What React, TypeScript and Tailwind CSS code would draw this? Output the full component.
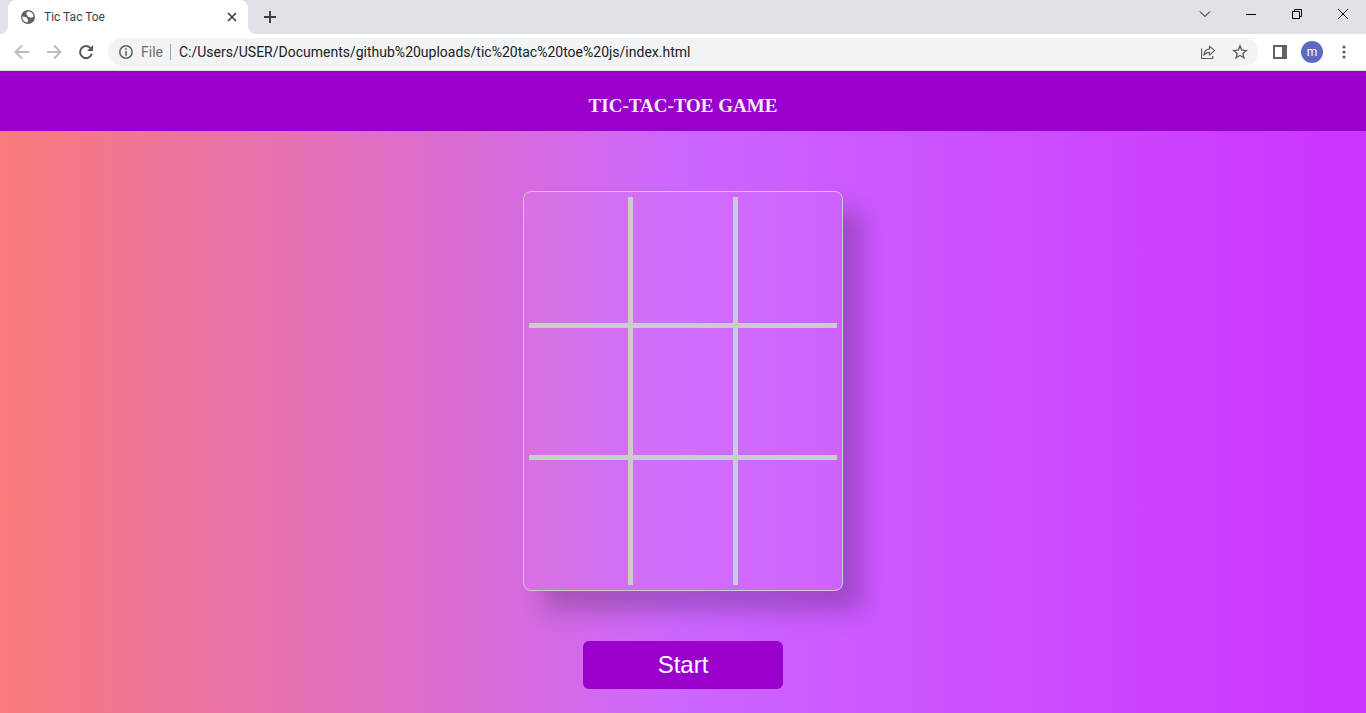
import { useState } from "react";

function GlobeIcon() {
  return (
    <svg width="16" height="16" viewBox="0 0 16 16" aria-hidden="true">
      <circle cx="8" cy="8" r="7" fill="#5f6368" />
      <path
        d="M9.200 2.600C7.500 2.500 6.300 3.400 6.300 4.600c0 1.400 1.100 1.200 1.100 2.100 0 .900.800 1.300 1.900 1.200.900 0 1 .900 1.700.900 1 0 1.600-.900 2.600-.700A5.700 5.700 0 0 0 9.200 2.600zM2.300 7.400c1 .700 1.900.300 2.900.500 1.500.200 2.200 1 2.200 2 0 .600.900.400.900 1.100 0 .900-.900 1-.900 2.600A5.700 5.700 0 0 1 2.300 7.400z"
        fill="#fff"
      />
    </svg>
  );
}

function TabStrip() {
  return (
    <div className="flex h-[34px] items-stretch bg-[#dee1e6]">
      <div className="flex w-2 items-end bg-white">
        <div className="h-full w-2 rounded-br-lg bg-[#dee1e6]" />
      </div>
      <div className="flex w-[240px] items-center bg-[#dee1e6]">
        <div className="flex h-full w-full items-center rounded-t-lg bg-white pr-2 pl-3">
          <GlobeIcon />
          <span className="ml-2 flex-1 text-xs text-[#3c4043]">Tic Tac Toe</span>
          <button type="button" aria-label="Close tab" className="flex size-4 items-center justify-center">
            <svg width="10" height="10" viewBox="0 0 10 10" stroke="#3c4043" strokeWidth="1.700">
              <path d="M1 1l8 8M9 1l-8 8" />
            </svg>
          </button>
        </div>
      </div>
      <div className="w-2 bg-white">
        <div className="h-full w-2 rounded-bl-lg bg-[#dee1e6]" />
      </div>
      <button type="button" aria-label="New tab" className="flex w-7 items-center justify-center">
        <svg width="12" height="12" viewBox="0 0 12 12" stroke="#3c4043" strokeWidth="2">
          <path d="M6 0v12M0 6h12" />
        </svg>
      </button>
      <div className="ml-auto flex h-7 text-black">
        <button type="button" aria-label="Search tabs" className="flex w-[46px] items-center justify-center">
          <svg width="12" height="8" viewBox="0 0 12 8" fill="none" stroke="currentColor">
            <path d="M1 1.500l5 5 5-5" />
          </svg>
        </button>
        <button type="button" aria-label="Minimize" className="flex w-[46px] items-center justify-center">
          <svg width="10" height="2" viewBox="0 0 10 2" fill="currentColor">
            <path d="M0 1h10v1H0z" />
          </svg>
        </button>
        <button type="button" aria-label="Restore" className="flex w-[46px] items-center justify-center">
          <svg width="10" height="10" viewBox="0 0 10 10" fill="none" stroke="currentColor">
            <path d="M.5 2.500h7v7h-7zM2.500 2.500v-2h7v7h-2" />
          </svg>
        </button>
        <button type="button" aria-label="Close" className="flex w-[46px] items-center justify-center">
          <svg width="12" height="12" viewBox="0 0 12 12" stroke="currentColor">
            <path d="M1 1l10 10M11 1L1 11" />
          </svg>
        </button>
      </div>
    </div>
  );
}

function Toolbar() {
  return (
    <div className="flex h-[37px] items-center border-b border-[#dadce0] bg-white pl-1.5">
      <button type="button" aria-label="Back" className="flex size-8 items-center justify-center">
        <svg width="16" height="16" viewBox="0 0 16 16" fill="none" stroke="#babcbe" strokeWidth="2">
          <path d="M15 8H2.500M8 1.500L1.500 8 8 14.500" />
        </svg>
      </button>
      <button type="button" aria-label="Forward" className="flex size-8 items-center justify-center">
        <svg width="16" height="16" viewBox="0 0 16 16" fill="none" stroke="#babcbe" strokeWidth="2">
          <path d="M1 8h12.500M8 1.500L14.500 8 8 14.500" />
        </svg>
      </button>
      <button type="button" aria-label="Reload" className="flex size-8 items-center justify-center">
        <svg width="16" height="16" viewBox="0 0 16 16">
          <path d="M12.700 4.300A6 6 0 1 0 13.800 9.800" fill="none" stroke="#54575c" strokeWidth="2" />
          <path d="M15 1v6H9z" fill="#54575c" />
        </svg>
      </button>
      <div className="ml-1.5 flex h-7 flex-1 items-center rounded-full bg-[#f1f3f4] pr-2.5 pl-[11px]">
        <svg width="14" height="14" viewBox="0 0 14 14" aria-hidden="true">
          <circle cx="7" cy="7" r="6.200" fill="none" stroke="#5f6368" strokeWidth="1.500" />
          <path d="M6.200 3.300h1.600v1.500H6.200zM6.200 6h1.600v4.700H6.200z" fill="#5f6368" />
        </svg>
        <label htmlFor="address" className="ml-2 w-[22px] text-sm text-[#6b6f74]">
          File
        </label>
        <span className="ml-[7px] h-4 w-px bg-[#9aa0a6]" />
        <input
          id="address"
          readOnly
          value="C:/Users/USER/Documents/github%20uploads/tic%20tac%20toe%20js/index.html"
          className="ml-2 min-w-0 flex-1 bg-transparent text-sm text-[#202124] outline-none"
        />
        <button type="button" aria-label="Share this page" className="flex size-4 items-center justify-center">
          <svg width="16" height="16" viewBox="0 0 16 16" fill="none" stroke="#5f6368" strokeWidth="1.200">
            <path d="M1.600 4.500v10h11.200v-2.500" />
            <path d="M9.500 2.200v2.700C6 5.300 4.200 7.600 3.800 11.200c1.500-2 3.200-2.800 5.700-2.800v2.700L14.600 6.600z" strokeLinejoin="round" />
          </svg>
        </button>
        <button type="button" aria-label="Bookmark this tab" className="ml-4 flex size-4 items-center justify-center">
          <svg width="16" height="16" viewBox="0 0 16 16" fill="none" stroke="#5f6368" strokeWidth="1.400">
            <path d="M8 1.900l1.800 4.200 4.500.4-3.400 3 1 4.400L8 11.500l-3.900 2.400 1-4.400-3.400-3 4.500-.4z" />
          </svg>
        </button>
      </div>
      <button type="button" aria-label="Side panel" className="ml-3.5 flex size-4 items-center justify-center">
        <svg width="14" height="14" viewBox="0 0 14 14" fill="#5f6368">
          <path fillRule="evenodd" d="M0 0h14v14H0zM2 2v10h7V2z" />
        </svg>
      </button>
      <button
        type="button"
        aria-label="Profile"
        className="ml-[13px] flex size-[22px] items-center justify-center rounded-full bg-[#5c6bc0] text-xs leading-none text-white"
      >
        m
      </button>
      <button type="button" aria-label="Menu" className="mr-3.5 ml-[13px] flex size-4 items-center justify-center">
        <svg width="4" height="14" viewBox="0 0 4 14" fill="#5f6368">
          <circle cx="2" cy="2" r="1.600" />
          <circle cx="2" cy="7" r="1.600" />
          <circle cx="2" cy="12" r="1.600" />
        </svg>
      </button>
    </div>
  );
}

const cellBorders = [
  "border-r-5 border-b-5",
  "border-r-5 border-b-5",
  "border-b-5",
  "border-r-5 border-b-5",
  "border-r-5 border-b-5",
  "border-b-5",
  "border-r-5",
  "border-r-5",
  "",
];

const lines = [
  [0, 1, 2],
  [3, 4, 5],
  [6, 7, 8],
  [0, 3, 6],
  [1, 4, 7],
  [2, 5, 8],
  [0, 4, 8],
  [2, 4, 6],
];

function Game() {
  const [marks, setMarks] = useState<string[]>(Array(9).fill(""));
  const [playing, setPlaying] = useState(false);
  const turn = marks.filter(Boolean).length % 2 === 0 ? "X" : "O";
  const won = lines.some(([a, b, c]) => marks[a] !== "" && marks[a] === marks[b] && marks[a] === marks[c]);

  const play = (index: number) => {
    if (!playing || won || marks[index]) return;
    setMarks(marks.map((mark, i) => (i === index ? turn : mark)));
  };

  const start = () => {
    setMarks(Array(9).fill(""));
    setPlaying(true);
  };

  return (
    <main className="flex flex-1 flex-col items-center bg-linear-to-r/srgb from-[#f97a7a] via-[#cc66ff] to-[#cc33ff] px-4 pt-[60px] pb-6">
      <div className="rounded-lg border border-[#cccccc] bg-white/5 p-[5px] shadow-[20px_20px_25px_rgba(0,0,0,0.21)]">
        <div className="grid grid-cols-[104px_105px_99px] grid-rows-[131px_132px_125px]">
          {marks.map((mark, i) => (
            <button
              key={i}
              type="button"
              aria-label={`Cell ${i + 1}`}
              onClick={() => play(i)}
              className={`border-[#cccccc] text-6xl text-white ${cellBorders[i]}`}
            >
              {mark}
            </button>
          ))}
        </div>
      </div>
      <button
        type="button"
        onClick={start}
        className="mt-[50px] h-12 w-[200px] rounded-md bg-[#9900cc] font-['Liberation_Sans',sans-serif] text-2xl text-white"
      >
        Start
      </button>
    </main>
  );
}

export default function App() {
  return (
    <div className="flex min-h-screen flex-col font-['Roboto',sans-serif]">
      <TabStrip />
      <Toolbar />
      <header className="flex h-[60px] items-center justify-center bg-[#9900cc] pt-2.5">
        <h1 className="font-['Liberation_Serif',serif] text-[19px] font-bold text-[#eeeeee]">TIC-TAC-TOE GAME</h1>
      </header>
      <Game />
    </div>
  );
}
